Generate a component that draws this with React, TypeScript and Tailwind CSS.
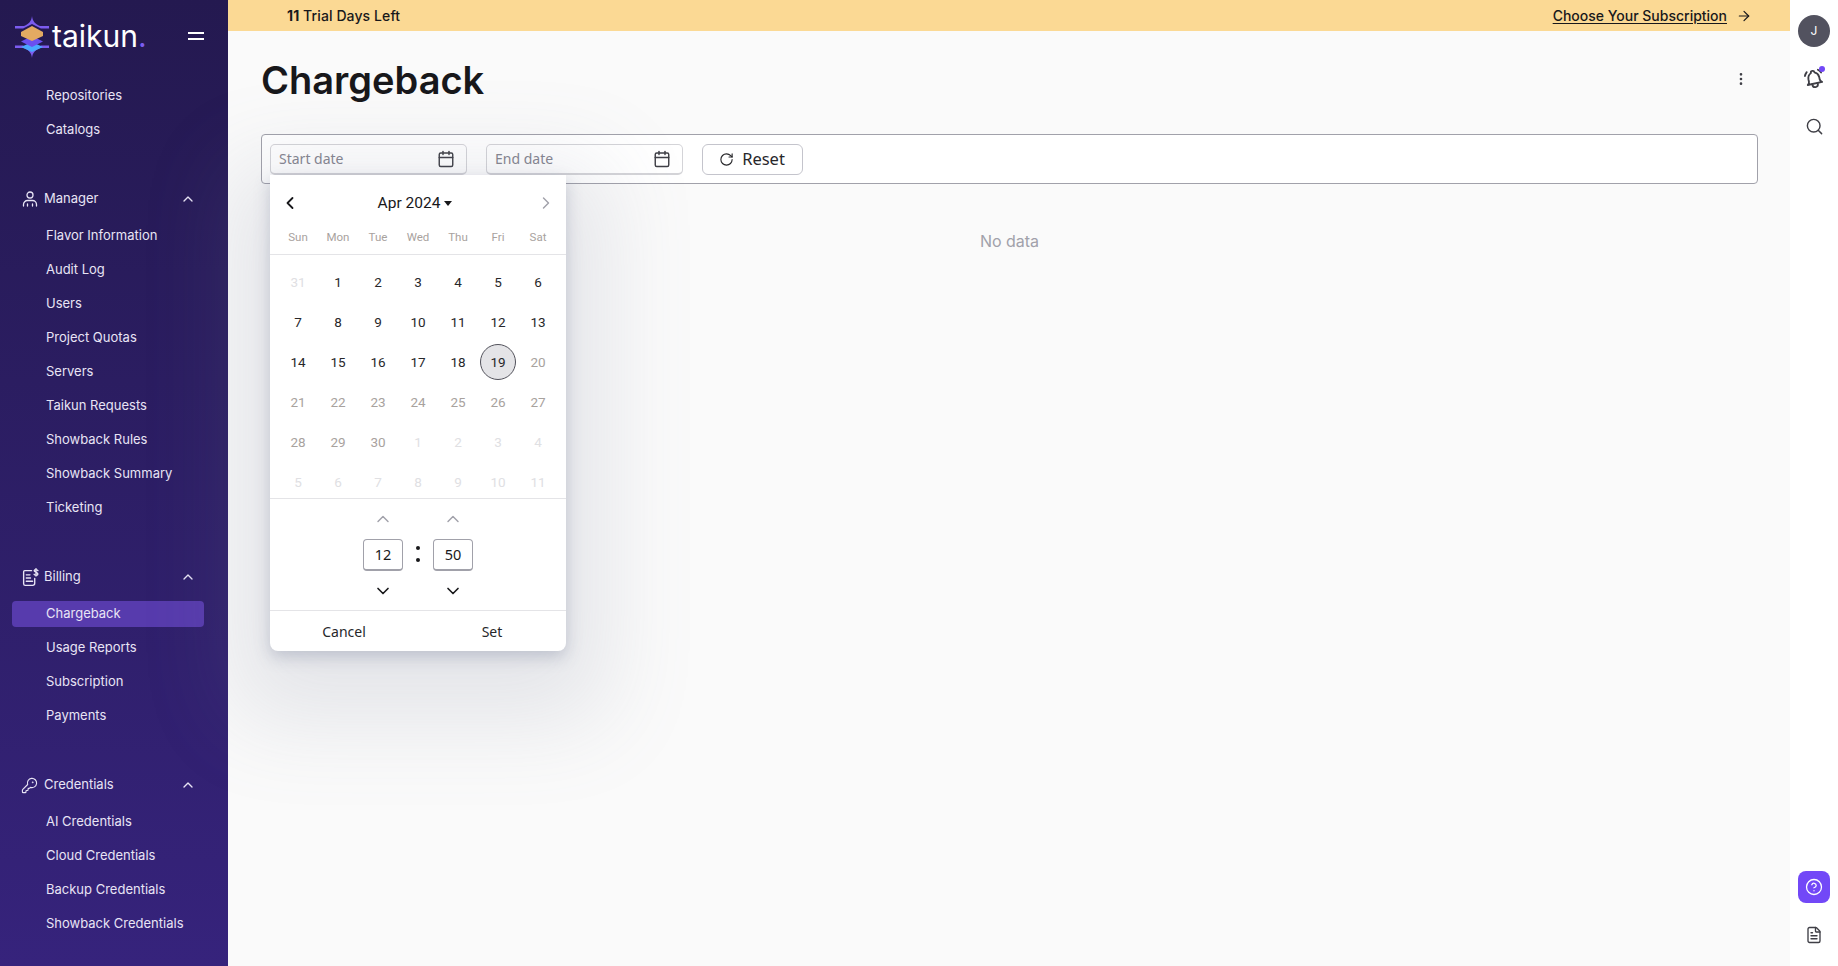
import { Calendar, ChevronDown, ChevronLeft, ChevronRight, ChevronUp, CircleHelp, EllipsisVertical, FileText, KeyRound, RotateCw, Search, ArrowRight } from 'lucide-react';
import { TbBellRinging } from 'react-icons/tb';
import type { ReactNode } from 'react';

const inter = 'font-["Inter",sans-serif]';

function Logo() {
    return (
        <svg width="36" height="44" viewBox="0 0 36 44" fill="none" className="shrink-0">
            <path d="M18 1c.5 5 3 8 8 10h9v2.500h-8L18 9l-9 4.500H1V11h9c5-2 7.500-5 8-10Z" fill="#7c5cf0" />
            <path d="M18 43c.5-5 3-8 8-10h9v-2.500h-8L18 35l-9-4.500H1V33h9c5 2 7.500 5 8 10Z" fill="#7c5cf0" />
            <path d="M18 27 29 32 18 37 7 32Z" fill="#4aa8ff" />
            <path d="M18 21 29 26.500 18 32 7 26.500Z" fill="#6a4ff0" />
            <path d="M18 11 29 17 29 21 18 26 7 21 7 17Z" fill="#e3aa62" />
        </svg>
    );
}

function ManagerIcon() {
    return (
        <svg width="16" height="16" viewBox="0 0 16 16" fill="none" stroke="currentColor" strokeWidth="1.300" strokeLinecap="round">
            <circle cx="8" cy="4" r="3" />
            <path d="M1.500 15v-1.500A4 4 0 0 1 5.500 9.500h5a4 4 0 0 1 4 4V15M5.500 13v2M10.500 13v2" />
        </svg>
    );
}

function BillingIcon() {
    return (
        <svg width="17" height="19" viewBox="0 0 16 18" fill="none" stroke="currentColor" strokeWidth="1.300" strokeLinecap="round" strokeLinejoin="round">
            <path d="M9 2.500H2.500a1 1 0 0 0-1 1V15a1.500 1.500 0 0 0 1.500 1.500h7a2 2 0 0 0 2-2V10" />
            <path d="M4 6.500h3.500M4 9.500h4M4 12.500h6" />
            <path d="M15 2.500C14.500 1.500 12 1 11.500 2.500c-.4 1.500 3.500 1.500 3.500 3.200 0 1.500-3 1.600-3.600.3M13.200 .6v7" />
        </svg>
    );
}

const groups: { label?: string; icon?: ReactNode; items: string[] }[] = [
    { items: ['Repositories', 'Catalogs'] },
    {
        label: 'Manager',
        icon: <ManagerIcon />,
        items: ['Flavor Information', 'Audit Log', 'Users', 'Project Quotas', 'Servers', 'Taikun Requests', 'Showback Rules', 'Showback Summary', 'Ticketing'],
    },
    { label: 'Billing', icon: <BillingIcon />, items: ['Chargeback', 'Usage Reports', 'Subscription', 'Payments'] },
    {
        label: 'Credentials',
        icon: <KeyRound className="w-[17px] h-[17px] -ml-[1px]" strokeWidth={1.6} />,
        items: ['AI Credentials', 'Cloud Credentials', 'Backup Credentials', 'Showback Credentials'],
    },
];

function Sidebar() {
    return (
        <aside className={`w-[228px] shrink-0 h-full overflow-hidden bg-gradient-to-b from-[#241950] to-[#36237c] text-[#e8e4f5] ${inter}`}>
            <div className="h-[83px] flex items-start pl-[14px] pt-[15px]">
                <Logo />
                <span className="ml-[2px] mt-[1px] text-[30px] leading-[40px] text-white">
                    taikun<span className="text-[#7c5cf0]">.</span>
                </span>
                <div className="ml-auto mr-[24px] mt-[17px] flex flex-col gap-[4px]">
                    <div className="w-[16px] h-[2px] bg-white" />
                    <div className="w-[16px] h-[2px] bg-white" />
                </div>
            </div>
            <nav className="flex flex-col gap-[43px]">
                {groups.map((group, i) => (
                    <div key={i}>
                        {group.label && (
                            <div className="h-[26px] mb-[11px] flex items-center pl-[22px] pr-[32px] text-[13px]">
                                <span className="w-[22px] flex">{group.icon}</span>
                                {group.label}
                                <ChevronUp className="w-[16px] h-[16px] ml-auto" />
                            </div>
                        )}
                        <div className="flex flex-col gap-2">
                            {group.items.map((item) => (
                                <a
                                    key={item}
                                    className={`h-[26px] ml-[12px] w-[192px] pl-[34px] flex items-center rounded-[4px] text-[13px] ${item === 'Chargeback' ? 'bg-[#573bad]' : ''}`}
                                >
                                    {item}
                                </a>
                            ))}
                        </div>
                    </div>
                ))}
            </nav>
        </aside>
    );
}

function DateInput({ placeholder }: { placeholder: string }) {
    return (
        <div className="w-[197px] h-[31px] pl-[8px] pr-[11px] flex items-center justify-between bg-white rounded-[5px] border border-[#d4d4d8] border-b-2 font-['Noto_Sans',sans-serif] text-[14px] text-[#858590]">
            {placeholder}
            <Calendar className="w-[18px] h-[18px] text-[#3f3f46]" strokeWidth={1.9} />
        </div>
    );
}

const weekdays = ['Sun', 'Mon', 'Tue', 'Wed', 'Thu', 'Fri', 'Sat'];
// [label, tone] tone 0 current, 1 out of range, 2 other month
const days: [number, number][] = [
    [31, 2], [1, 0], [2, 0], [3, 0], [4, 0], [5, 0], [6, 0],
    [7, 0], [8, 0], [9, 0], [10, 0], [11, 0], [12, 0], [13, 0],
    [14, 0], [15, 0], [16, 0], [17, 0], [18, 0], [19, 0], [20, 1],
    [21, 1], [22, 1], [23, 1], [24, 1], [25, 1], [26, 1], [27, 1],
    [28, 1], [29, 1], [30, 1], [1, 2], [2, 2], [3, 2], [4, 2],
    [5, 2], [6, 2], [7, 2], [8, 2], [9, 2], [10, 2], [11, 2],
];

function TimeColumn({ value }: { value: string }) {
    return (
        <div className="w-[40px] flex flex-col items-center">
            <ChevronUp className="w-[20px] h-[20px] text-[#a1a1aa] mt-[10px]" strokeWidth={1.7} />
            <div className="w-[40px] h-[32px] mt-[10px] flex items-center justify-center rounded-[4px] border border-[#a1a1aa] border-b-2 font-['Noto_Sans',sans-serif] text-[14.500px] text-[#18181b]">
                {value}
            </div>
            <ChevronDown className="w-[20px] h-[20px] text-[#18181b] mt-[10px]" strokeWidth={2} />
        </div>
    );
}

function DatePicker() {
    return (
        <div className="absolute left-[9px] top-[41px] z-10 w-[296px] h-[476px] flex flex-col bg-white rounded-b-[8px] shadow-[0_6px_16px_rgba(100,110,140,0.3),0_30px_90px_40px_rgba(120,125,150,0.16)]">
            <div className="h-[56px] shrink-0 pt-[18px] px-[10px] flex items-start justify-between">
                <ChevronLeft className="w-[20px] h-[20px] text-[#18181b]" strokeWidth={2.2} />
                <span className="mr-[6px] flex items-center gap-[4px] font-['Roboto',sans-serif] text-[15.500px] leading-[20px] text-[#18181b]">
                    Apr 2024
                    <span className="mt-[1px] w-0 h-0 border-x-[4.500px] border-x-transparent border-t-[5px] border-t-[#18181b]" />
                </span>
                <ChevronRight className="w-[20px] h-[20px] text-[#a1a1aa]" strokeWidth={1.7} />
            </div>
            <div className="h-[24px] shrink-0 px-[8px] grid grid-cols-7 border-b border-[#e4e4e7] font-['Roboto',sans-serif] text-[11.500px] text-[#a8a29e] text-center leading-[12px]">
                {weekdays.map((d) => (
                    <span key={d}>{d}</span>
                ))}
            </div>
            <div className="h-[243px] shrink-0 px-[8px] pt-[7px] grid grid-cols-7 auto-rows-[40px] font-['Roboto',sans-serif] text-[13.500px] overflow-hidden">
                {days.map(([d, tone], i) => (
                    <div key={i} className="flex items-center justify-center">
                        <span
                            className={`w-[36px] h-[36px] flex items-center justify-center rounded-full ${i === 19 ? 'bg-[#e4e4e7] border border-[#52525b]' : ''} ${tone === 0 ? 'text-[#27272a]' : tone === 1 ? 'text-[#a8a29e]' : 'text-[#e0e0e3]'}`}
                        >
                            {d}
                        </span>
                    </div>
                ))}
            </div>
            <div className="h-[113px] shrink-0 border-y border-[#e4e4e7] flex justify-center gap-[15px]">
                <TimeColumn value="12" />
                <div className="w-0 flex flex-col items-center pt-[47px] gap-[8px]">
                    <span className="w-[4px] h-[4px] shrink-0 rounded-full bg-[#18181b]" />
                    <span className="w-[4px] h-[4px] shrink-0 rounded-full bg-[#18181b]" />
                </div>
                <TimeColumn value="50" />
            </div>
            <div className="flex-1 flex items-center font-['Noto_Sans',sans-serif] text-[14px] text-[#27272a]">
                <span className="w-[148px] text-center">Cancel</span>
                <span className="w-[148px] text-center">Set</span>
            </div>
        </div>
    );
}

export default function App() {
    return (
        <div className="w-[1838px] h-[966px] flex overflow-hidden bg-white">
            <Sidebar />
            <div className={`flex-1 flex flex-col bg-[#fafafa] ${inter} text-[#18181b]`}>
                <div className="h-[31px] shrink-0 bg-[#fbd994] flex items-center justify-between pl-[59px] pr-[38px] text-[14px] font-medium">
                    <span className="tracking-[0.1px]">
                        <b className="font-bold">11</b> Trial Days Left
                    </span>
                    <span className="flex items-center gap-[9px]">
                        <span className="underline underline-offset-[2px]">Choose Your Subscription</span>
                        <ArrowRight className="w-[16px] h-[16px]" strokeWidth={1.8} />
                    </span>
                </div>
                <div className="flex-1 pl-[33px] pr-[32px]">
                    <div className="h-[103px] flex items-center justify-between pb-[5px]">
                        <h1 className="text-[38px] font-semibold leading-[48px]">Chargeback</h1>
                        <EllipsisVertical className="w-[16px] h-[16px] mr-[9px] mt-[-3px] text-[#3f3f46]" />
                    </div>
                    <div className="relative">
                        <div className="h-[50px] flex items-center gap-[19px] pl-[8px] bg-white rounded-[4px] border border-[#a1a1aa]">
                            <DateInput placeholder="Start date" />
                            <DateInput placeholder="End date" />
                            <button className="w-[101px] h-[31px] pr-[1px] flex items-center justify-center gap-[8px] rounded-[6px] border border-[#c4c4cc] font-['Noto_Sans',sans-serif] text-[16.500px] text-[#27272a]">
                                <RotateCw className="w-[15px] h-[15px]" strokeWidth={1.8} />
                                Reset
                            </button>
                        </div>
                        <DatePicker />
                    </div>
                    <p className="mt-[45px] text-center text-[16px] leading-[24px] text-[#a1a1aa]">No data</p>
                </div>
            </div>
            <div className="w-[48px] shrink-0 flex flex-col items-center bg-white text-[#3f3f46]">
                <div className={`mt-[15px] w-[32px] h-[32px] rounded-full bg-[#52525f] flex items-center justify-center text-[12px] text-white ${inter}`}>J</div>
                <div className="relative mt-[21px]">
                    <TbBellRinging className="w-[22px] h-[22px] -rotate-12" />
                    <span className="absolute -top-[2px] right-[0px] w-[6px] h-[6px] rounded-full bg-[#7248f7]" />
                </div>
                <Search className="w-[19px] h-[19px] mt-[27px]" strokeWidth={1.8} />
                <div className="mt-auto w-[32px] h-[32px] rounded-[8px] bg-[#7248f7] flex items-center justify-center text-white">
                    <CircleHelp className="w-[18px] h-[18px]" strokeWidth={1.7} />
                </div>
                <FileText className="w-[18px] h-[18px] mt-[23px] mb-[22px]" strokeWidth={1.8} />
            </div>
        </div>
    );
}
